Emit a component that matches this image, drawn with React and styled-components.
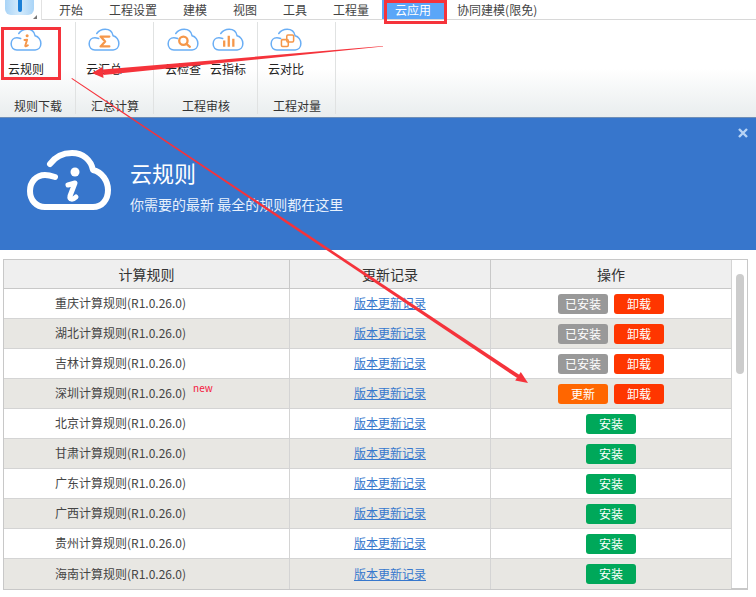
import React from 'react'
import styled, { createGlobalStyle } from 'styled-components'

const GlobalStyle = createGlobalStyle`
  html, body {
    margin: 0;
    padding: 0;
    background: #fff;
    overflow: hidden;
  }
  body {
    font-family: "Noto Sans CJK SC", "Liberation Sans", sans-serif;
    font-size: 12px;
    color: #333;
  }
`

const Page = styled.div`
  position: relative;
  width: 756px;
  height: 597px;
  overflow: hidden;
`

const MenuBar = styled.div`
  display: flex;
  height: 20px;
`

const LogoBox = styled.div`
  position: relative;
  width: 42px;
  height: 20px;
  border-right: 1px solid #e2e2e2;
  box-sizing: border-box;
  overflow: hidden;
`

const LogoTile = styled.div`
  width: 29px;
  height: 30px;
  margin: -15px 0 0 5px;
  border-radius: 6px;
  background: linear-gradient(90deg, #a9d4f7, #d5ebfb 50%, #a9d4f7);
`

const LogoDrop = styled.div`
  position: absolute;
  left: 18px;
  top: 0;
  width: 4px;
  height: 12px;
  border-radius: 0 0 2px 2px;
  background: #1a7fd6;
`

const LogoCorner = styled.div`
  position: absolute;
  right: 4px;
  bottom: 1px;
  width: 0;
  height: 0;
  border-left: 4px solid transparent;
  border-bottom: 4px solid #777;
`

const Tabs = styled.div`
  flex: 1;
  display: flex;
  padding-left: 4px;
  border-bottom: 1px solid #d8d8d8;
`

const Tab = styled.div`
  padding: 0 13px;
  line-height: 19px;
  height: 19px;
  color: ${p => (p.$active ? '#fff' : '#444')};
  background: ${p => (p.$active ? '#5aa6f8' : 'transparent')};
`

const Ribbon = styled.div`
  display: flex;
  height: 97px;
  box-sizing: border-box;
  background: linear-gradient(180deg, #fff 0, #fff 50%, #e9edee 100%);
`

const Group = styled.div`
  width: ${p => p.$width}px;
  box-sizing: border-box;
  margin: 2px 0 3px;
  border-right: 1px solid #e0e2e2;
  display: flex;
  flex-direction: column;
`

const Items = styled.div`
  flex: 1;
  display: flex;
  gap: 9px;
  padding: 6px 0 0 ${p => p.$left}px;
`

const Item = styled.div`
  width: 36px;
  display: flex;
  flex-direction: column;
  align-items: center;
  color: #222;
  line-height: 18px;
  gap: 8px;
`

const GroupLabel = styled.div`
  text-align: center;
  line-height: 18px;
  padding-left: 1px;
  margin-bottom: -1px;
  color: #333;
`

const Banner = styled.div`
  position: relative;
  height: 133px;
  box-sizing: border-box;
  padding: 0 0 7px 27px;
  display: flex;
  align-items: center;
  gap: 19px;
  background: #3776cc;
  border-top: 1px solid #6f8fb8;
  color: #fff;
`

const BannerText = styled.div`
  display: flex;
  flex-direction: column;
  margin-top: 9px;
`

const BannerTitle = styled.div`
  font-size: 22px;
  line-height: 30px;
`

const BannerSub = styled.div`
  font-size: 14px;
  line-height: 20px;
  margin-top: 7px;
  color: #e8f1fc;
`

const Close = styled.svg`
  position: absolute;
  right: 8px;
  top: 10px;
`

const Frame = styled.div`
  display: flex;
  width: 745px;
  height: 331px;
  box-sizing: border-box;
  margin: 9px 0 0 3px;
  border: 1px solid #c8c8c8;
  border-bottom-width: 2px;
`

const Table = styled.div`
  width: 728px;
  border-right: 1px solid #d4d4d4;
  box-sizing: border-box;
`

const Row = styled.div`
  display: grid;
  grid-template-columns: 286px 201px 1fr;
  height: ${p => (p.$head ? 29 : 30)}px;
  box-sizing: border-box;
  border-bottom: 1px solid ${p => (p.$head ? '#c8c8c8' : '#d4d4d4')};
  background: ${p => (p.$head ? '#efefef' : p.$even ? '#e8e7e3' : '#fff')};
  &:last-child {
    border-bottom: 0;
  }
`

const HeadCell = styled.div`
  display: flex;
  align-items: center;
  justify-content: center;
  font-size: 14px;
  color: #333;
  border-right: 1px solid #c8c8c8;
  &:last-child {
    border-right: 0;
  }
`

const NameCell = styled.div`
  display: flex;
  align-items: center;
  padding: 0 0 2px 51px;
  color: #444;
  border-right: 1px solid #d4d4d4;
`

const New = styled.span`
  font-size: 10px;
  line-height: 10px;
  color: #f5163b;
  margin: -9px 0 0 7px;
`

const LinkCell = styled.div`
  display: flex;
  align-items: center;
  justify-content: center;
  padding-bottom: 2px;
  border-right: 1px solid #d4d4d4;
`

const LogLink = styled.a`
  color: #3778cd;
  text-decoration: underline;
`

const ActionCell = styled.div`
  display: flex;
  align-items: center;
  justify-content: center;
  gap: 6px;
`

const btnColors = {
  gray: '#999',
  red: '#ff3600',
  orange: '#ff6600',
  green: '#00a85a',
}

const Btn = styled.div`
  width: 50px;
  height: 20px;
  line-height: 19px;
  border-radius: 3px;
  text-align: center;
  color: #fff;
  background: ${p => btnColors[p.$kind]};
`

const Track = styled.div`
  flex: 1;
  padding: 14px 3px 0 4px;
`

const Thumb = styled.div`
  height: 100px;
  border-radius: 4px;
  background: #ccc;
`

const RedBox = styled.div`
  position: absolute;
  left: ${p => p.$x}px;
  top: ${p => p.$y}px;
  width: ${p => p.$w}px;
  height: ${p => p.$h}px;
  box-sizing: border-box;
  border: 3px solid #f5333b;
`

const ArrowLayer = styled.svg`
  position: absolute;
  left: 0;
  top: 0;
  pointer-events: none;
`

const CloudSvg = styled.svg`
  display: block;
  fill: none;
  stroke-linecap: round;
  stroke-linejoin: round;
`

const cloudPath =
  'M23 14C28 7 36 3 45 3C56 3 64 10 66 20C75 22 81 31 81 40C81 50 75 57 66 57L18 57C9 57 3 50 3 41C3 32 9 25 18 25C21 25 25 26 28 27'

const Cloud = ({ children }) => (
  <CloudSvg width="32" height="24" viewBox="0 0 84 62">
    <path d={cloudPath} stroke="#6aaef5" strokeWidth="4" />
    <g stroke="#f5974a" strokeWidth="5">
      {children}
    </g>
  </CloudSvg>
)

const InfoGlyph = () => (
  <>
    <circle cx="45" cy="20" r="4" fill="#f5974a" stroke="none" />
    <path d="M38 31L45 30L40 46C40 48 43 48 47 45" />
  </>
)

const SumGlyph = () => <path d="M56 22H33L45 35L33 48H56" strokeWidth="6" />

const SearchGlyph = () => (
  <>
    <circle cx="43" cy="33" r="11" strokeWidth="6" />
    <path d="M51 41L60 49" strokeWidth="6" />
  </>
)

const BarsGlyph = () => <path d="M32 32V49M44 20V49M56 28V49" strokeWidth="6" strokeLinecap="butt" />

const CompareGlyph = () => (
  <>
    <rect x="44" y="18" width="18" height="18" rx="3" strokeWidth="4" />
    <rect x="30" y="30" width="18" height="18" rx="3" strokeWidth="4" />
  </>
)

const HeroCloud = () => (
  <CloudSvg width="84" height="62" viewBox="0 0 84 62">
    <path d={cloudPath} stroke="#fff" strokeWidth="6" />
    <circle cx="48" cy="22" r="4.5" fill="#fff" />
    <path d="M41 35L48 33L43 46C42 50 46 50 49 47" stroke="#fff" strokeWidth="5" />
  </CloudSvg>
)

const rules = [
  { name: '重庆', state: 'installed' },
  { name: '湖北', state: 'installed' },
  { name: '吉林', state: 'installed' },
  { name: '深圳', state: 'update' },
  { name: '北京' },
  { name: '甘肃' },
  { name: '广东' },
  { name: '广西' },
  { name: '贵州' },
  { name: '海南' },
]

const tabs = ['开始', '工程设置', '建模', '视图', '工具', '工程量', '云应用', '协同建模(限免)']

const groups = [
  { label: '规则下载', width: 76, left: 8, items: [['云规则', <InfoGlyph key="i" />]] },
  { label: '汇总计算', width: 78, left: 10, items: [['云汇总', <SumGlyph key="s" />]] },
  {
    label: '工程审核',
    width: 104,
    left: 11,
    items: [
      ['云检查', <SearchGlyph key="q" />],
      ['云指标', <BarsGlyph key="b" />],
    ],
  },
  { label: '工程对量', width: 78, left: 10, items: [['云对比', <CompareGlyph key="c" />]] },
]

const Actions = ({ state }) => {
  if (!state) {
    return (
      <ActionCell>
        <Btn $kind="green">安装</Btn>
      </ActionCell>
    )
  }
  return (
    <ActionCell>
      {state === 'update' ? <Btn $kind="orange">更新</Btn> : <Btn $kind="gray">已安装</Btn>}
      <Btn $kind="red">卸载</Btn>
    </ActionCell>
  )
}

const App = () => (
  <Page>
    <GlobalStyle />
    <MenuBar>
      <LogoBox>
        <LogoTile />
        <LogoDrop />
        <LogoCorner />
      </LogoBox>
      <Tabs>
        {tabs.map(t => (
          <Tab key={t} $active={t === '云应用'}>
            {t}
          </Tab>
        ))}
      </Tabs>
    </MenuBar>

    <Ribbon>
      {groups.map(g => (
        <Group key={g.label} $width={g.width}>
          <Items $left={g.left}>
            {g.items.map(([text, glyph]) => (
              <Item key={text}>
                <Cloud>{glyph}</Cloud>
                {text}
              </Item>
            ))}
          </Items>
          <GroupLabel>{g.label}</GroupLabel>
        </Group>
      ))}
    </Ribbon>

    <Banner>
      <HeroCloud />
      <BannerText>
        <BannerTitle>云规则</BannerTitle>
        <BannerSub>你需要的最新 最全的规则都在这里</BannerSub>
      </BannerText>
      <Close width="10" height="10" viewBox="0 0 10 10">
        <path d="M1 1L9 9M9 1L1 9" stroke="#b8d4f5" strokeWidth="2.4" />
      </Close>
    </Banner>

    <Frame>
      <Table>
        <Row $head>
          <HeadCell>计算规则</HeadCell>
          <HeadCell>更新记录</HeadCell>
          <HeadCell>操作</HeadCell>
        </Row>
        {rules.map((r, i) => (
          <Row key={r.name} $even={i % 2 === 1}>
            <NameCell>
              {r.name}计算规则(R1.0.26.0)
              {r.state === 'update' && <New>new</New>}
            </NameCell>
            <LinkCell>
              <LogLink href="#">版本更新记录</LogLink>
            </LinkCell>
            <Actions state={r.state} />
          </Row>
        ))}
      </Table>
      <Track>
        <Thumb />
      </Track>
    </Frame>

    <RedBox $x={1} $y={27} $w={60} $h={53} />
    <RedBox $x={384} $y={0} $w={63} $h={24} />

    <ArrowLayer width="756" height="597" viewBox="0 0 756 597">
      <g fill="#f5333b">
        <polygon points="383,46 383,46.6 103.4,75 102.8,69.5" />
        <polygon points="92,73 103.5,78 102.5,67" />
        <polygon points="72,78 71.4,78.8 517.2,378.1 519.6,375.1" />
        <polygon points="528,383 515.2,380.5 520.8,372.1" />
      </g>
    </ArrowLayer>
  </Page>
)

export default App
